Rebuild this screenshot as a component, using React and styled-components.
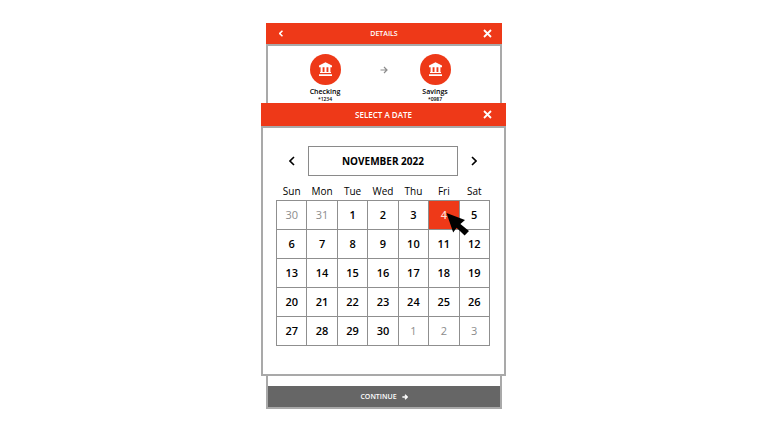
import React, { useState } from "react";
import styled, { createGlobalStyle, css } from "styled-components";

const RED = "#ee3918";
const LINE = "#a9a9a9";

const GlobalStyle = createGlobalStyle`
  *, *::before, *::after { box-sizing: border-box; }
  body {
    margin: 0;
    background: #fff;
    color: #000;
    font-family: "Open Sans", "Noto Sans", sans-serif;
  }
  button { font: inherit; color: inherit; cursor: pointer; }
`;

const Page = styled.main`
  display: flex;
  justify-content: center;
  padding: 23px 16px;
`;

const Screen = styled.section`
  position: relative;
  width: 100%;
  max-width: 236px;
`;

const Bar = styled.header`
  display: grid;
  grid-template-columns: ${(p) => (p.$dialog ? "38px 1fr 38px" : "30px 1fr 30px")};
  align-items: center;
  height: ${(p) => (p.$dialog ? 23 : 21)}px;
  background: ${RED};
  color: #fff;
`;

const BarTitle = styled.h1`
  grid-column: 2;
  margin: 0;
  font-size: ${(p) => (p.$large ? 8 : 7)}px;
  line-height: 10px;
  font-weight: 600;
  text-align: center;
`;

const IconButton = styled.button`
  display: flex;
  align-items: center;
  justify-content: center;
  padding: 0;
  border: 0;
  background: none;
`;

const ScreenBody = styled.div`
  display: flex;
  flex-direction: column;
  justify-content: space-between;
  min-height: 365px;
  border: 2px solid ${LINE};
`;

const Transfer = styled.div`
  display: grid;
  grid-template-columns: 5fr 38px 4fr;
  padding: 8px 33px 0 17px;
`;

const Account = styled.div`
  display: flex;
  flex-direction: column;
  align-items: center;
`;

const AccountBadge = styled.span`
  display: flex;
  align-items: center;
  justify-content: center;
  width: 31px;
  height: 31px;
  margin-bottom: 2px;
  border-radius: 50%;
  background: ${RED};
  color: #fff;
`;

const AccountName = styled.span`
  font-size: 7px;
  line-height: 10px;
  font-weight: 600;
`;

const AccountNumber = styled.span`
  font-size: 5px;
  line-height: 5px;
  font-weight: 600;
`;

const Between = styled.span`
  display: flex;
  align-items: center;
  justify-content: center;
  height: 31px;
  color: #8c8c8c;
`;

const ContinueButton = styled.button`
  display: flex;
  align-items: center;
  justify-content: center;
  gap: 5px;
  width: 100%;
  height: 21px;
  padding: 0;
  border: 0;
  background: #666;
  && { color: #fff; }
  && {
    font-size: 7px;
    line-height: 10px;
    font-weight: 600;
  }
`;

const Dialog = styled.section`
  position: absolute;
  top: 80px;
  left: -5px;
  right: -4px;
`;

const DialogBody = styled.div`
  padding: 18px 14px 28px 13px;
  border: 2px solid ${LINE};
  background: #fff;
`;

const MonthRow = styled.div`
  display: grid;
  grid-template-columns: 32px 1fr 32px;
  align-items: stretch;
`;

const MonthLabel = styled.h2`
  margin: 0;
  border: 1px solid #8a8a8a;
  font-size: 10px;
  line-height: 28px;
  font-weight: 700;
  text-align: center;
`;

const Calendar = styled.table`
  width: 100%;
  margin-top: 6px;
  border-collapse: collapse;
  table-layout: fixed;
`;

const Weekday = styled.th`
  padding: 0;
  font-size: 10px;
  line-height: 18px;
  font-weight: 500;
`;

const DayCell = styled.td`
  height: 29px;
  padding: 0;
  border: 1px solid #8f8f8f;
`;

const Day = styled.button`
  display: block;
  width: 100%;
  height: 28px;
  padding: 0;
  border: 0;
  background: ${(p) => (p.$selected ? RED : "transparent")};
  && {
    color: #000;
    font-size: 11px;
    line-height: 28px;
    font-weight: 600;
    ${(p) => p.$outside && css`color: #8c8c8c; font-weight: 400;`}
    ${(p) => p.$selected && css`color: #ffd9cd;`}
  }
`;

const Pointer = styled.svg`
  position: absolute;
  top: 109px;
  left: 185px;
  pointer-events: none;
`;

const Chevron = ({ size, weight, flip }) => (
  <svg width={size * 0.6} height={size} viewBox="0 0 6 10" fill="none" stroke="currentColor" strokeWidth={weight} aria-hidden="true">
    <path d={flip ? "M1 1l4 4-4 4" : "M5 1L1 5l4 4"} />
  </svg>
);

const Cross = () => (
  <svg width="9" height="9" viewBox="0 0 9 9" stroke="currentColor" strokeWidth="1.8" aria-hidden="true">
    <path d="M1 1l7 7M8 1L1 8" />
  </svg>
);

const Arrow = ({ size, weight }) => (
  <svg width={size} height={size} viewBox="0 0 8 8" fill="none" stroke="currentColor" strokeWidth={weight} aria-hidden="true">
    <path d="M0.5 4H7M4 1l3 3-3 3" />
  </svg>
);

const Bank = () => (
  <svg width="15" height="15" viewBox="0 0 15 15" fill="currentColor" aria-hidden="true">
    <path d="M7.5 0.3L14 3.6V5.2H1V3.6zM2.6 5h2v6h-2zM6.5 5h2v6h-2zM10.4 5h2v6h-2zM2 10h11v1H2zM1 12.2h13v1.9H1z" />
  </svg>
);

const WEEKDAYS = ["Sun", "Mon", "Tue", "Wed", "Thu", "Fri", "Sat"];
const WEEKS = Array.from({ length: 5 }, (_, week) =>
  WEEKDAYS.map((_, day) => {
    const n = week * 7 + day - 1;
    if (n < 1) return { label: n + 31, outside: true };
    if (n > 30) return { label: n - 30, outside: true };
    return { label: n, outside: false };
  })
);

function AccountCard({ name, number }) {
  return (
    <Account>
      <AccountBadge><Bank /></AccountBadge>
      <AccountName>{name}</AccountName>
      <AccountNumber>{number}</AccountNumber>
    </Account>
  );
}

function DateDialog() {
  const [selected, setSelected] = useState(4);
  return (
    <Dialog role="dialog" aria-label="Select a date">
      <Bar $dialog>
        <BarTitle as="h2" $large>SELECT A DATE</BarTitle>
        <IconButton aria-label="Close calendar"><Cross /></IconButton>
      </Bar>
      <DialogBody>
        <MonthRow>
          <IconButton aria-label="Previous month"><Chevron size={10} weight={1.6} /></IconButton>
          <MonthLabel>NOVEMBER 2022</MonthLabel>
          <IconButton aria-label="Next month"><Chevron size={10} weight={1.6} flip /></IconButton>
        </MonthRow>
        <Calendar>
          <thead>
            <tr>{WEEKDAYS.map((d) => <Weekday key={d} scope="col">{d}</Weekday>)}</tr>
          </thead>
          <tbody>
            {WEEKS.map((week, i) => (
              <tr key={i}>
                {week.map((day) => {
                  const isSelected = !day.outside && day.label === selected;
                  return (
                    <DayCell key={day.label}>
                      <Day
                        $outside={day.outside}
                        $selected={isSelected}
                        aria-pressed={isSelected}
                        onClick={() => !day.outside && setSelected(day.label)}
                      >
                        {day.label}
                      </Day>
                    </DayCell>
                  );
                })}
              </tr>
            ))}
          </tbody>
        </Calendar>
      </DialogBody>
      <Pointer width="24" height="25" viewBox="0 0 24 25" aria-hidden="true">
        <path d="M0.5 1L19 8l-4.6 3.9 8.6 7-4.4 4.6-8-7.8L7.2 20.5z" fill="#000" />
      </Pointer>
    </Dialog>
  );
}

export default function App() {
  return (
    <>
      <GlobalStyle />
      <Page>
        <Screen>
          <Bar>
            <IconButton aria-label="Back"><Chevron size={7} weight={2.2} /></IconButton>
            <BarTitle>DETAILS</BarTitle>
            <IconButton aria-label="Close"><Cross /></IconButton>
          </Bar>
          <ScreenBody>
            <Transfer>
              <AccountCard name="Checking" number="*1234" />
              <Between><Arrow size={8} weight={1.2} /></Between>
              <AccountCard name="Savings" number="*0987" />
            </Transfer>
            <ContinueButton>CONTINUE <Arrow size={6} weight={1.8} /></ContinueButton>
          </ScreenBody>
          <DateDialog />
        </Screen>
      </Page>
    </>
  );
}
